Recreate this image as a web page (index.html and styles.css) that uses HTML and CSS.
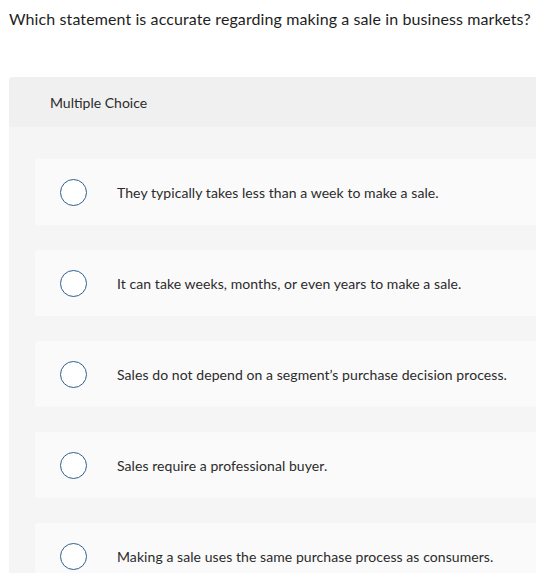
FILE: index.html
```html
<!DOCTYPE html>
<html lang="en">
<head>
<meta charset="utf-8">
<title>Multiple Choice</title>
<link rel="stylesheet" href="styles.css">
</head>
<body>
<div class="page">
  <p class="question">Which statement is accurate regarding making a sale in business markets?</p>
  <section class="panel">
    <header class="panel-head">Multiple Choice</header>
    <div class="panel-body">
      <label class="option"><span class="radio"></span><span class="opt-text">They typically takes less than a week to make a sale.</span></label>
      <label class="option"><span class="radio"></span><span class="opt-text">It can take weeks, months, or even years to make a sale.</span></label>
      <label class="option"><span class="radio"></span><span class="opt-text">Sales do not depend on a segment’s purchase decision process.</span></label>
      <label class="option"><span class="radio"></span><span class="opt-text">Sales require a professional buyer.</span></label>
      <label class="option"><span class="radio"></span><span class="opt-text">Making a sale uses the same purchase process as consumers.</span></label>
    </div>
  </section>
</div>
</body>
</html>
```
FILE: styles.css
```css
html, body {
  margin: 0;
  padding: 0;
  overflow: hidden;
  background: #ffffff;
}
body {
  font-family: Lato, "Open Sans", "Liberation Sans", sans-serif;
  color: #333333;
}
.page {
  padding: 9px 0 0 9px;
}
.question {
  margin: 0 0 48px 0;
  font-size: 16px;
  line-height: 20px;
  letter-spacing: 0.1px;
  color: #1e1e1e;
  white-space: nowrap;
}
.panel {
  margin-right: -40px;
  border-radius: 4px 0 0 0;
  overflow: hidden;
  background: #f5f5f5;
}
.panel-head {
  height: 50px;
  display: flex;
  align-items: center;
  padding-left: 41px;
  background: #f0f0f0;
  font-size: 14px;
  color: #2b2b2b;
}
.panel-body {
  display: flex;
  flex-direction: column;
  gap: 25px;
  padding: 32px 0 40px 26px;
}
.option {
  height: 66px;
  display: flex;
  align-items: center;
  gap: 30px;
  padding-left: 25px;
  background: #fafafa;
  border-radius: 3px 0 0 3px;
}
.radio {
  width: 25px;
  height: 25px;
  border: 1.5px solid #2e5f8f;
  border-radius: 50%;
  background: #ffffff;
  flex: none;
}
.opt-text {
  font-size: 14px;
  letter-spacing: 0.07px;
  color: #2b2b2b;
  white-space: nowrap;
}
```
